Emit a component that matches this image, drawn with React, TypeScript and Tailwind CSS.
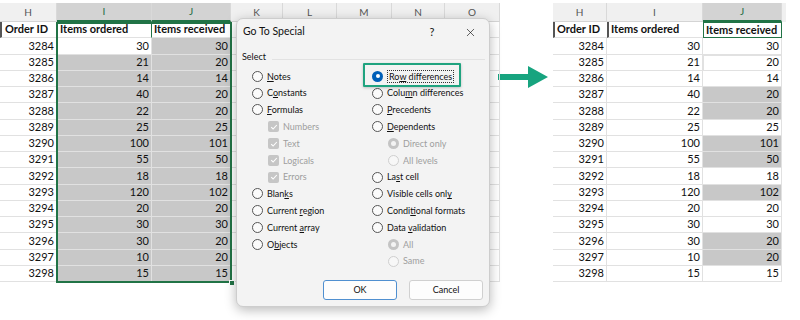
import { X } from 'lucide-react';
import type { ReactNode } from 'react';

const ROWS: [number, number, number][] = [
  [3284, 30, 30],
  [3285, 21, 20],
  [3286, 14, 14],
  [3287, 40, 20],
  [3288, 22, 20],
  [3289, 25, 25],
  [3290, 100, 101],
  [3291, 55, 50],
  [3292, 18, 18],
  [3293, 120, 102],
  [3294, 20, 20],
  [3295, 30, 30],
  [3296, 30, 20],
  [3297, 10, 20],
  [3298, 15, 15],
];

const sheetFont = { fontFamily: 'Lato, "Open Sans", sans-serif' };
const uiFont = { fontFamily: 'Lato, "Noto Sans", sans-serif' };

type Col = { letter: string; w: number };

const LEFT_COLS: Col[] = [
  { letter: 'H', w: 57 },
  { letter: 'I', w: 95 },
  { letter: 'J', w: 79 },
  { letter: 'K', w: 52 },
  { letter: 'L', w: 54 },
  { letter: 'M', w: 55 },
  { letter: 'N', w: 53 },
  { letter: 'O', w: 55 },
];

const RIGHT_COLS: Col[] = [
  { letter: 'H', w: 54 },
  { letter: 'I', w: 96 },
  { letter: 'J', w: 79 },
];

// which cells of the right sheet got picked by "Row differences"
const PICKED = new Set([3287, 3288, 3290, 3291, 3293, 3296, 3297]);

function ColHeader({ cols, selected }: { cols: Col[]; selected: string[] }) {
  return (
    <div className="flex h-[19px] bg-[#f0f0f0]">
      {cols.map((c) => {
        const on = selected.includes(c.letter);
        return (
          <div
            key={c.letter}
            style={{ width: c.w }}
            className={`flex items-center justify-center text-[10px] border-r border-[#d9d9d9] shrink-0 ${
              on ? 'bg-[#d3d3d3] text-[#1d6b3f] border-b-2 border-b-[#217346]' : 'text-[#555] border-b border-b-[#d4d4d4]'
            }`}
          >
            {c.letter}
          </div>
        );
      })}
    </div>
  );
}

function Cell({ w, children, className = '' }: { w: number; children?: ReactNode; className?: string }) {
  return (
    <div
      style={{ width: w }}
      className={`h-full shrink-0 flex items-center justify-end pr-[2px] border-r border-b border-[#e1e1e1] ${className}`}
    >
      {children}
    </div>
  );
}

function LeftSheet() {
  const extra = LEFT_COLS.slice(3);
  return (
    <div className="relative w-[500px] shrink-0 pt-[3px] text-[11px] text-[#111]" style={sheetFont}>
      <ColHeader cols={LEFT_COLS} selected={['I', 'J']} />
      <div className="flex h-[16.25px] font-bold">
        <div className="w-[57px] shrink-0 h-full flex items-center pl-[3px] border-l-2 border-[#555] border-b border-b-[#e1e1e1] border-r border-r-[#e1e1e1]">
          Order ID
        </div>
        <div className="w-[95px] shrink-0 h-full flex items-center pl-[3px] border-r border-[#217346] border-b border-b-[#e1e1e1]">
          Items ordered
        </div>
        <div className="w-[79px] shrink-0 h-full flex items-center pl-[2px] border-b border-[#e1e1e1]">
          Items received
        </div>
        {extra.map((c) => (
          <Cell key={c.letter} w={c.w} />
        ))}
      </div>
      {ROWS.map(([id, a, b], i) => (
        <div key={id} className="flex h-[16.25px]">
          <Cell w={57}>{id}</Cell>
          <Cell w={95} className={i === 0 ? 'bg-white' : 'bg-[#c8c8c8] border-[#d3d3d3]'}>
            {a}
          </Cell>
          <Cell w={79} className="bg-[#c8c8c8] border-[#d3d3d3]">
            {b}
          </Cell>
          {extra.map((c) => (
            <Cell key={c.letter} w={c.w} />
          ))}
        </div>
      ))}
      {/* selection outline */}
      <div className="absolute left-[56px] top-[22px] w-[176px] h-[261px] border-2 border-[#217346] pointer-events-none" />
      <div className="absolute left-[229px] top-[280px] w-[6px] h-[6px] bg-[#217346] border border-white" />
    </div>
  );
}

function RightSheet() {
  return (
    <div className="relative w-[247px] shrink-0 pt-[3px] text-[11px] text-[#111]" style={sheetFont}>
      <div className="flex">
        <ColHeader cols={RIGHT_COLS} selected={['J']} />
        <div className="w-[4px] h-[19px] bg-[#f0f0f0]" />
      </div>
      <div className="flex h-[16.25px] font-bold">
        <div className="w-[54px] shrink-0 h-full flex items-center pl-[2px] border-l-2 border-[#555] border-b border-b-[#e1e1e1]">
          Order ID
        </div>
        <div className="w-[96px] shrink-0 h-full flex items-center pl-[2px] border-l-2 border-[#555] border-b border-b-[#e1e1e1]">
          Items ordered
        </div>
        <div className="w-[79px] shrink-0 h-full flex items-center pl-[2px] border border-[#217346]">
          Items received
        </div>
      </div>
      {ROWS.map(([id, a, b]) => (
        <div key={id} className="flex h-[16.25px]">
          <Cell w={54}>{id}</Cell>
          <Cell w={96}>{a}</Cell>
          <Cell
            w={79}
            className={
              id === 3285
                ? 'border border-[#217346]'
                : PICKED.has(id)
                  ? 'bg-[#c8c8c8] border-[#d6d6d6]'
                  : ''
            }
          >
            {b}
          </Cell>
        </div>
      ))}
    </div>
  );
}

function Radio({ checked, disabled }: { checked?: boolean; disabled?: boolean }) {
  if (checked && !disabled)
    return (
      <span className="w-[11px] h-[11px] rounded-full bg-[#005fb8] flex items-center justify-center shrink-0">
        <span className="w-[4px] h-[4px] rounded-full bg-white" />
      </span>
    );
  if (checked)
    return (
      <span className="w-[11px] h-[11px] rounded-full bg-[#c4c4c4] flex items-center justify-center shrink-0">
        <span className="w-[5px] h-[5px] rounded-full bg-[#f3f3f3]" />
      </span>
    );
  return (
    <span
      className={`w-[11px] h-[11px] rounded-full border shrink-0 ${
        disabled ? 'border-[#cfcfcf] bg-[#f7f7f7]' : 'border-[#555] bg-[#fbfbfb]'
      }`}
    />
  );
}

function Check() {
  return (
    <span className="w-[11px] h-[11px] rounded-[2px] bg-[#c6c6c6] flex items-center justify-center shrink-0">
      <svg width="8" height="8" viewBox="0 0 8 8" fill="none">
        <path d="M1.2 4.2 L3.1 6 L6.8 2" stroke="white" strokeWidth="1.1" />
      </svg>
    </span>
  );
}

type Opt = { label: ReactNode; kind: 'radio' | 'check'; checked?: boolean; disabled?: boolean; indent?: boolean };

const u = (s: string) => <span className="underline">{s}</span>;

const LEFT_OPTS: Opt[] = [
  { kind: 'radio', label: <>{u('N')}otes</> },
  { kind: 'radio', label: <>C{u('o')}nstants</> },
  { kind: 'radio', label: <>{u('F')}ormulas</> },
  { kind: 'check', label: 'Numbers', disabled: true, indent: true },
  { kind: 'check', label: 'Text', disabled: true, indent: true },
  { kind: 'check', label: 'Logicals', disabled: true, indent: true },
  { kind: 'check', label: 'Errors', disabled: true, indent: true },
  { kind: 'radio', label: <>Blan{u('k')}s</> },
  { kind: 'radio', label: <>Current {u('r')}egion</> },
  { kind: 'radio', label: <>Current {u('a')}rray</> },
  { kind: 'radio', label: <>O{u('b')}jects</> },
];

const RIGHT_OPTS: Opt[] = [
  {
    kind: 'radio',
    checked: true,
    label: <span className="border border-dotted border-[#333] px-[1px] leading-[11px]">Ro{u('w')} differences</span>,
  },
  { kind: 'radio', label: <>Colu{u('m')}n differences</> },
  { kind: 'radio', label: <>{u('P')}recedents</> },
  { kind: 'radio', label: <>{u('D')}ependents</> },
  { kind: 'radio', label: 'Direct only', checked: true, disabled: true, indent: true },
  { kind: 'radio', label: 'All levels', disabled: true, indent: true },
  { kind: 'radio', label: <>La{u('s')}t cell</> },
  { kind: 'radio', label: <>Visible cells onl{u('y')}</> },
  { kind: 'radio', label: <>Condi{u('t')}ional formats</> },
  { kind: 'radio', label: <>Data {u('v')}alidation</> },
  { kind: 'radio', label: 'All', checked: true, disabled: true, indent: true },
  { kind: 'radio', label: 'Same', disabled: true, indent: true },
];

function OptionList({ opts }: { opts: Opt[] }) {
  return (
    <div className="flex flex-col">
      {opts.map((o, i) => (
        <div
          key={i}
          className={`flex items-center gap-[4px] h-[16.8px] ${o.indent ? 'pl-[16px]' : ''} ${
            o.disabled ? 'text-[#9e9e9e]' : 'text-[#111]'
          }`}
        >
          {o.kind === 'radio' ? <Radio checked={o.checked} disabled={o.disabled} /> : <Check />}
          <span>{o.label}</span>
        </div>
      ))}
    </div>
  );
}

function Dialog() {
  return (
    <div
      className="absolute left-[236px] top-[18px] w-[254px] h-[289px] rounded-[7px] bg-[#f3f3f3] border border-[#cdcdcd] shadow-[0_3px_12px_rgba(0,0,0,0.28)] flex flex-col text-[9px]"
      style={uiFont}
    >
      <div className="flex items-center h-[26px] text-[#111]">
        <span className="flex-1 pl-[6px] text-[10.5px]">Go To Special</span>
        <span className="w-[38px] text-center text-[11px]">?</span>
        <span className="w-[38px] flex justify-center">
          <X size={13} strokeWidth={1.2} />
        </span>
      </div>
      <div className="flex items-center h-[23px] pl-[5px] gap-[6px] text-[#111]">
        <span>Select</span>
        <span className="flex-1 h-px bg-[#e2e2e2] mt-[5px] mr-[4px]" />
      </div>
      <div className="grid grid-cols-[120px_1fr] pl-[15px]">
        <OptionList opts={LEFT_OPTS} />
        <OptionList opts={RIGHT_OPTS} />
      </div>
      <div className="mt-auto flex justify-end gap-[12px] pr-[6px] pb-[6px] text-[#111]">
        <button className="w-[74px] h-[20px] rounded-[3px] bg-[#fdfdfd] border border-[#4f8fd0]">OK</button>
        <button className="w-[74px] h-[20px] rounded-[3px] bg-[#fdfdfd] border border-[#d0d0d0]">Cancel</button>
      </div>
      {/* callout box round the chosen option */}
      <div className="absolute left-[126px] top-[44px] w-[98px] h-[24px] border-2 border-[#1fa37f] rounded-[1px] shadow-[0_1px_3px_rgba(0,0,0,0.2)] pointer-events-none" />
    </div>
  );
}

export default function App() {
  return (
    <div className="relative w-[800px] h-[320px] bg-white overflow-hidden flex">
      <LeftSheet />
      <div className="w-[53px] shrink-0 pt-[64px]">
        <svg width="54" height="26" viewBox="0 0 54 26" className="-ml-[4px]">
          <path d="M2 10 H32 V2 L52 13 L32 24 V16 H2 Z" fill="#17a47f" />
        </svg>
      </div>
      <RightSheet />
      <Dialog />
    </div>
  );
}
